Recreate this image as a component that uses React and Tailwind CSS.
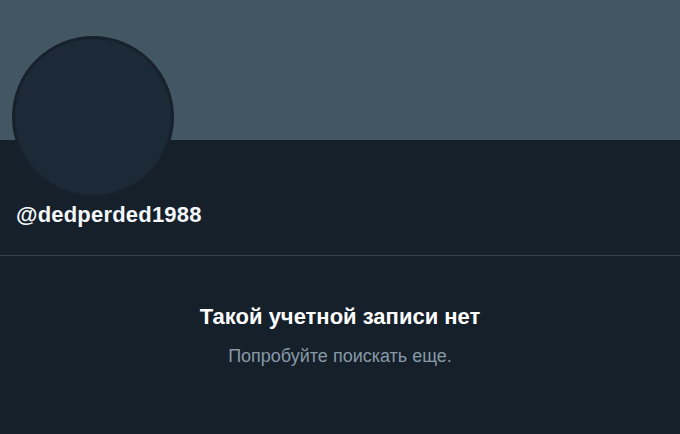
export default function App() {
  return (
    <div className="w-[680px] h-[434px] overflow-hidden bg-[#15202b] font-['Liberation_Sans',Arial,sans-serif]">
      <div className="h-[140px] bg-[#425664]" />
      <div className="px-[12px]">
        <div className="-mt-[104px] w-[162px] h-[162px] rounded-full border-[3px] border-[#16212c] bg-[#1c2936]" />
        <div className="mt-[2px] pl-[4px] text-[22px] leading-[30px] font-bold tracking-[0.2px] text-[#f5f8fa]">@dedperded1988</div>
      </div>
      <div className="mt-[25px] h-px bg-[#38444d]" />
      <div className="flex flex-col items-center pt-[47px]">
        <div className="text-[22px] leading-[28px] font-bold text-white">Такой учетной записи нет</div>
        <div className="mt-[14px] text-[18px] leading-[22px] text-[#8899a6]">Попробуйте поискать еще.</div>
      </div>
    </div>
  );
}
